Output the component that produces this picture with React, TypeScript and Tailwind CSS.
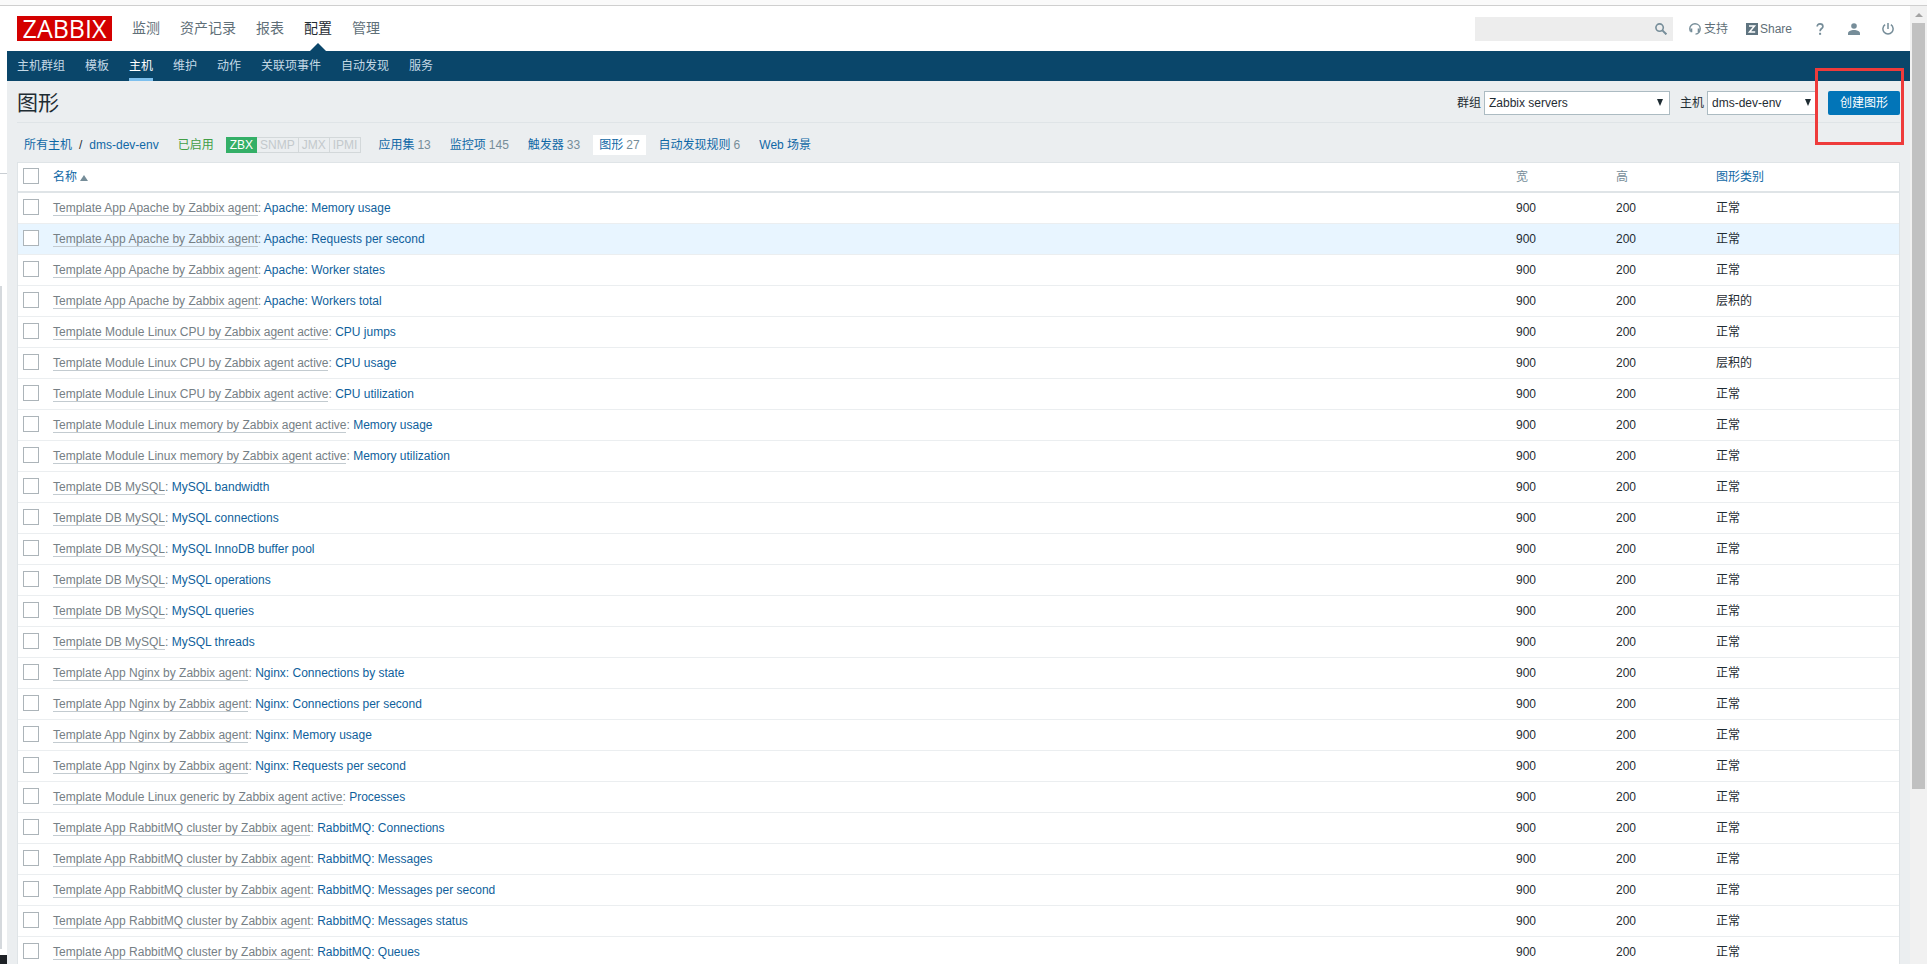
import React from "react";

const AP = "Template App Apache by Zabbix agent";
const CPU = "Template Module Linux CPU by Zabbix agent active";
const MEM = "Template Module Linux memory by Zabbix agent active";
const SQL = "Template DB MySQL";
const NG = "Template App Nginx by Zabbix agent";
const RMQ = "Template App RabbitMQ cluster by Zabbix agent";

const rows: { template: string; name: string; stacked?: boolean }[] = [
  { template: AP, name: "Apache: Memory usage" },
  { template: AP, name: "Apache: Requests per second" },
  { template: AP, name: "Apache: Worker states" },
  { template: AP, name: "Apache: Workers total", stacked: true },
  { template: CPU, name: "CPU jumps" },
  { template: CPU, name: "CPU usage", stacked: true },
  { template: CPU, name: "CPU utilization" },
  { template: MEM, name: "Memory usage" },
  { template: MEM, name: "Memory utilization" },
  { template: SQL, name: "MySQL bandwidth" },
  { template: SQL, name: "MySQL connections" },
  { template: SQL, name: "MySQL InnoDB buffer pool" },
  { template: SQL, name: "MySQL operations" },
  { template: SQL, name: "MySQL queries" },
  { template: SQL, name: "MySQL threads" },
  { template: NG, name: "Nginx: Connections by state" },
  { template: NG, name: "Nginx: Connections per second" },
  { template: NG, name: "Nginx: Memory usage" },
  { template: NG, name: "Nginx: Requests per second" },
  { template: "Template Module Linux generic by Zabbix agent active", name: "Processes" },
  { template: RMQ, name: "RabbitMQ: Connections" },
  { template: RMQ, name: "RabbitMQ: Messages" },
  { template: RMQ, name: "RabbitMQ: Messages per second" },
  { template: RMQ, name: "RabbitMQ: Messages status" },
  { template: RMQ, name: "RabbitMQ: Queues" },
];

const mainMenu = ["监测", "资产记录", "报表", "配置", "管理"];
const subMenu = ["主机群组", "模板", "主机", "维护", "动作", "关联项事件", "自动发现", "服务"];
const tabs = [
  { label: "应用集", count: 13 },
  { label: "监控项", count: 145 },
  { label: "触发器", count: 33 },
  { label: "图形", count: 27 },
  { label: "自动发现规则", count: 6 },
  { label: "Web 场景" },
];

function Check({ label }: { label: string }) {
  return (
    <input
      type="checkbox"
      aria-label={label}
      className="mb-0.5 block size-4 appearance-none border border-[#acb4b9] bg-white checked:bg-[#0275b8]"
    />
  );
}

function Dropdown({ id, label, value, width }: { id: string; label: string; value: string; width: string }) {
  return (
    <div className="flex items-center gap-[3px]">
      <label htmlFor={id}>{label}</label>
      <div className={`grid items-center ${width}`}>
        <select
          id={id}
          className="col-start-1 row-start-1 h-6 w-full appearance-none border border-[#acbbc2] bg-white px-1 text-[#1f2c33]"
        >
          <option>{value}</option>
        </select>
        <svg
          viewBox="0 0 6 7"
          className="pointer-events-none col-start-1 row-start-1 mr-[7px] h-[7px] w-1.5 justify-self-end"
        >
          <path d="M0 0h6L3 7z" fill="#1f2c33" />
        </svg>
      </div>
    </div>
  );
}

function Header() {
  return (
    <header className="flex h-[45px] shrink-0 items-center bg-white pr-3.5 pl-2.5">
      <a
        href="#home"
        className="flex h-[25px] w-[95px] items-center justify-center bg-[#d40000] font-['Open_Sans',sans-serif] text-[25px] leading-[25px] text-white"
      >
        ZABBIX
      </a>
      <nav className="ml-5 flex h-full items-stretch gap-5 text-[14px]">
        {mainMenu.map((m) => (
          <a
            key={m}
            href="#menu"
            className={
              m === "配置"
                ? "relative flex items-center pb-0.5 text-[#1f2c33]"
                : "flex items-center pb-0.5 text-[#5f6f78]"
            }
          >
            {m}
            {m === "配置" && (
              <svg viewBox="0 0 16 8" className="absolute bottom-0 left-1/2 h-2 w-4 -translate-x-1/2">
                <path d="M0 8 8 0l8 8z" fill="#0a466a" />
              </svg>
            )}
          </a>
        ))}
      </nav>
      <div className="ml-auto flex items-center text-[12px] text-[#5f6f78]">
        <form className="mr-4 grid h-6 w-[198px] items-center bg-[#ededed]">
          <input
            type="text"
            aria-label="搜索"
            className="col-start-1 row-start-1 h-6 w-full bg-transparent px-1 pr-6 outline-none"
          />
          <button
            type="button"
            aria-label="搜索"
            className="col-start-1 row-start-1 mr-1.5 justify-self-end"
          >
            <svg viewBox="0 0 12 12" className="size-3" fill="none" stroke="#768d99">
              <circle cx="4.6" cy="4.6" r="3.7" strokeWidth="1.6" />
              <path d="m7.4 7.4 4 4" strokeWidth="2" />
            </svg>
          </button>
        </form>
        <a href="#support" className="mr-[18px] flex items-center gap-[3px]">
          <svg viewBox="0 0 12 12" className="size-3" fill="none" stroke="#768d99">
            <path d="M1.500 8.500C1 7.500.8 6.600.8 5.600.8 2.900 3.100.8 6 .8s5.200 2.100 5.200 4.800c0 2.700-1.700 5.300-4.700 5.500" strokeWidth="1.400" />
            <path d="M2.400 5.400v3.800M9.600 5.400v3.800" strokeWidth="1.800" />
          </svg>
          支持
        </a>
        <a href="#share" className="flex items-center gap-0.5">
          <svg viewBox="0 0 12 12" className="size-3">
            <path d="M0 0h12v12H0z" fill="#5f7480" />
            <path d="M3 3h5.500L3.500 9H9.200" fill="none" stroke="#fff" strokeWidth="1.500" />
          </svg>
          Share
        </a>
        <a href="#help" aria-label="帮助" className="ml-5 flex w-4 justify-center">
          <svg viewBox="0 0 8 12" className="h-3 w-2" fill="none" stroke="#768d99" strokeWidth="1.700">
            <path d="M1.200 3.600C1.200 1.800 2.300.9 4 .9s2.900.9 2.900 2.500c0 2.100-2.800 2.200-2.800 4.800" />
            <path d="M4.100 9.800v2" strokeWidth="2" />
          </svg>
        </a>
        <a href="#profile" aria-label="用户" className="ml-[18px] flex w-4 justify-center">
          <svg viewBox="0 0 12 12" className="size-3" fill="#768d99">
            <circle cx="6" cy="3" r="2.800" />
            <path d="M0 12V10.200C0 8.300 3 7 6 7s6 1.300 6 3.200V12z" />
          </svg>
        </a>
        <a href="#logout" aria-label="退出" className="ml-[18px] flex w-4 justify-center">
          <svg viewBox="0 0 12 12" className="size-3" fill="none" stroke="#768d99" strokeWidth="1.500">
            <path d="M6 0v6M3.100 1.700a5.100 5.100 0 1 0 5.800 0" />
          </svg>
        </a>
      </div>
    </header>
  );
}

export default function App() {
  return (
    <div className="flex h-screen flex-col overflow-hidden bg-white font-['Liberation_Sans','Noto_Sans_CJK_SC',sans-serif] text-[12px] leading-[18px] text-[#1f2c33]">
      <div className="h-1.5 shrink-0 border-b border-[#cfcfcf] bg-[#fafafa]" />
      <div className="flex min-h-0 flex-1">
        <div className="flex w-[7px] shrink-0 flex-col">
          <div className="h-[168px] border-b border-[#c9ced3]" />
          <div className="mt-28 w-0.5 flex-1 bg-[#d5d9dd]" />
          <div className="mt-1.5 h-[9px] bg-[#1d2125]" />
        </div>

        <div className="flex min-w-0 flex-1 flex-col bg-[#ebeef0]">
          <Header />
          <nav className="flex h-[30px] shrink-0 gap-5 bg-[#0a466a] px-2.5">
            {subMenu.map((m) => (
              <a
                key={m}
                href="#sub"
                className={
                  m === "主机"
                    ? "flex items-center border-b-[3px] border-[#7ec0ee] pt-[3px] text-white"
                    : "flex items-center border-b-[3px] border-transparent pt-[3px] text-[#c5d9e6]"
                }
              >
                {m}
              </a>
            ))}
          </nav>

          <main className="min-h-0 flex-1 px-2.5">
            <div className="flex h-[42px] items-center justify-between border-b border-[#dfe4e7] pt-0.5">
              <h1 className="text-[21px] leading-6">图形</h1>
              <div className="relative flex items-center gap-2.5">
                <Dropdown id="group" label="群组" value="Zabbix servers" width="w-[186px]" />
                <Dropdown id="host" label="主机" value="dms-dev-env" width="w-[111px]" />
                <button
                  type="button"
                  className="h-6 w-[72px] rounded-[2px] bg-[#0275b8] text-center text-white"
                >
                  创建图形
                </button>
                <div className="pointer-events-none absolute -top-[23px] -right-1 h-[77px] w-[89px] border-[3px] border-[#ee3b3b]" />
              </div>
            </div>

            <div className="flex h-[39px] items-center pt-1 pl-[7px] text-[#0f68a6]">
              <a href="#hosts">所有主机</a>
              <span className="mx-[7px] text-[#1f2c33]">/</span>
              <a href="#host">dms-dev-env</a>
              <span className="ml-[19px] text-[#429e47]">已启用</span>
              <div className="ml-3 flex h-4 leading-[14px] text-[#c3c9cc]">
                <span className="border border-[#34af67] bg-[#34af67] px-[3px] text-white">ZBX</span>
                <span className="border border-l-0 border-[#d3d8da] px-[3px]">SNMP</span>
                <span className="border border-l-0 border-[#d3d8da] px-[3px]">JMX</span>
                <span className="border border-l-0 border-[#d3d8da] px-[3px]">IPMI</span>
              </div>
              <nav className="ml-[11px] flex gap-[7px]">
                {tabs.map((t) => (
                  <a
                    key={t.label}
                    href="#tab"
                    className={t.label === "图形" ? "bg-white px-1.5 py-px" : "px-1.5 py-px"}
                  >
                    {t.label}
                    {t.count && <span className="ml-[3px] text-[#768d99]">{t.count}</span>}
                  </a>
                ))}
              </nav>
            </div>

            <table className="w-full table-fixed border-separate border-spacing-0 border border-[#dfe4e7] bg-white text-left">
              <colgroup>
                <col className="w-[30px]" />
                <col />
                <col className="w-[100px]" />
                <col className="w-[100px]" />
                <col className="w-[188px]" />
              </colgroup>
              <thead>
                <tr className="h-[30px] text-[#768d99]">
                  <th className="border-b-2 border-[#dfe4e7] p-0 pl-[5px] font-normal">
                    <Check label="全选" />
                  </th>
                  <th className="border-b-2 border-[#dfe4e7] p-0 pl-[5px] font-normal">
                    <a href="#sort" className="inline-flex items-center gap-[3px] text-[#0f68a6]">
                      名称
                      <svg viewBox="0 0 8 6" className="mt-0.5 h-1.5 w-2">
                        <path d="M0 6 4 0l4 6z" fill="#768d99" />
                      </svg>
                    </a>
                  </th>
                  <th className="border-b-2 border-[#dfe4e7] p-0 pl-[5px] font-normal">宽</th>
                  <th className="border-b-2 border-[#dfe4e7] p-0 pl-[5px] font-normal">高</th>
                  <th className="border-b-2 border-[#dfe4e7] p-0 pl-[5px] font-normal">
                    <a href="#type" className="text-[#0f68a6]">图形类别</a>
                  </th>
                </tr>
              </thead>
              <tbody>
                {rows.map((r, i) => (
                  <tr key={r.template + r.name} className={i === 1 ? "h-[31px] bg-[#e8f5ff]" : "h-[31px]"}>
                    <td className="border-b border-[#ebeef0] p-0 pl-[5px]">
                      <Check label={r.name} />
                    </td>
                    <td className="border-b border-[#ebeef0] p-0 pl-[5px]">
                      <a href="#template" className="border-b border-[#c3cbd0] text-[#768085]">{r.template}</a>
                      <span className="text-[#768085]">: </span>
                      <a href="#graph" className="text-[#0f5f9c]">{r.name}</a>
                    </td>
                    <td className="border-b border-[#ebeef0] p-0 pl-[5px]">900</td>
                    <td className="border-b border-[#ebeef0] p-0 pl-[5px]">200</td>
                    <td className="border-b border-[#ebeef0] p-0 pl-[5px]">{r.stacked ? "层积的" : "正常"}</td>
                  </tr>
                ))}
              </tbody>
            </table>
          </main>
        </div>

        <div className="flex w-[17px] shrink-0 flex-col items-center bg-[#f1f1f1]">
          <div className="flex h-[17px] shrink-0 items-center">
            <svg viewBox="0 0 8 4" className="h-1 w-2">
              <path d="M0 4 4 0l4 4z" fill="#a3a3a3" />
            </svg>
          </div>
          <div className="h-4/5 w-[13px] bg-[#c1c1c1]" />
        </div>
      </div>
    </div>
  );
}
